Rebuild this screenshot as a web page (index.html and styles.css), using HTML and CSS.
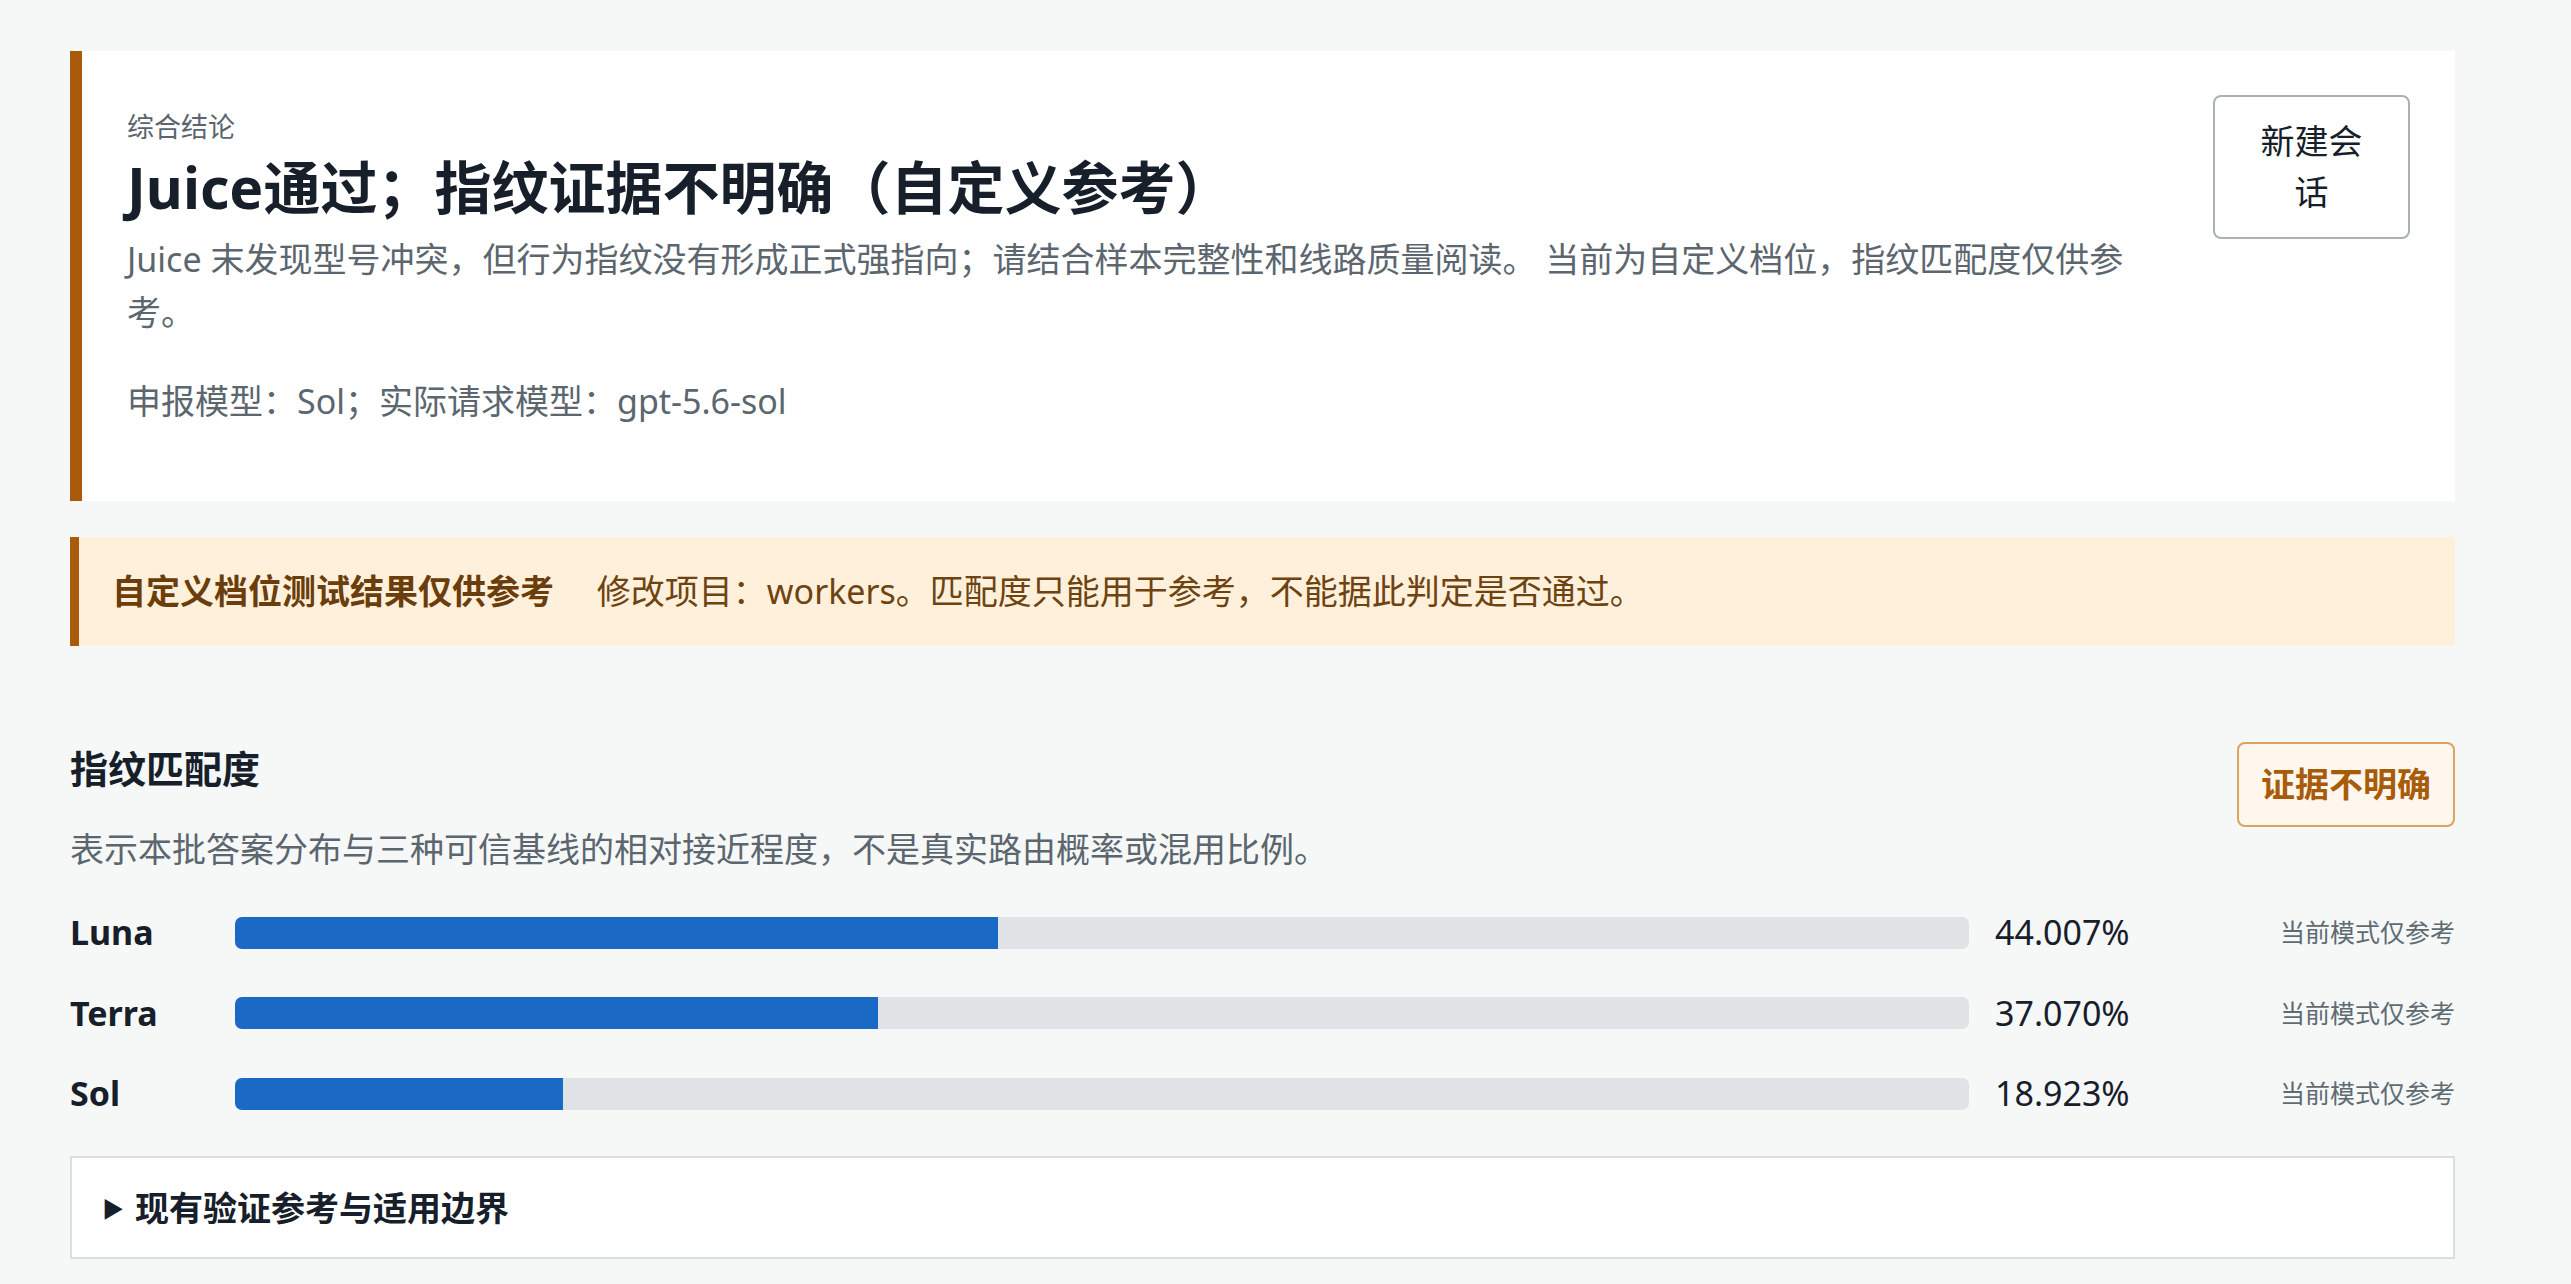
FILE: index.html
```html
<!DOCTYPE html>
<html lang="zh-CN">
<head>
    <meta charset="UTF-8">
    <meta name="viewport" content="width=device-width, initial-scale=1.0">
    <title>综合结论</title>
    <link rel="stylesheet" href="styles.css">
</head>
<body>
    <main class="page">
        <!-- Verdict card -->
        <section class="verdict-card">
            <div class="verdict-body">
                <div class="verdict-label">综合结论</div>
                <h1 class="verdict-title">Juice通过；指纹证据不明确（自定义参考）</h1>
                <p class="verdict-text">Juice 末发现型号冲突，但行为指纹没有形成正式强指向；请结合样本完整性和线路质量阅读。 当前为自定义档位，指纹匹配度仅供参考。</p>
                <p class="verdict-meta">申报模型：Sol；实际请求模型：gpt-5.6-sol</p>
            </div>
            <button class="new-session">新建会话</button>
        </section>

        <!-- Custom tier notice -->
        <div class="notice">
            <strong>自定义档位测试结果仅供参考</strong>
            <span>修改项目：workers。匹配度只能用于参考，不能据此判定是否通过。</span>
        </div>

        <!-- Fingerprint match -->
        <section class="match">
            <div class="match-head">
                <div>
                    <h2>指纹匹配度</h2>
                    <p class="match-desc">表示本批答案分布与三种可信基线的相对接近程度，不是真实路由概率或混用比例。</p>
                </div>
                <span class="badge">证据不明确</span>
            </div>

            <div class="match-rows">
                <div class="match-row">
                    <span class="row-name">Luna</span>
                    <div class="bar"><div class="bar-fill" style="width: 44.007%"></div></div>
                    <span class="row-value">44.007%</span>
                    <span class="row-hint">当前模式仅参考</span>
                </div>
                <div class="match-row">
                    <span class="row-name">Terra</span>
                    <div class="bar"><div class="bar-fill" style="width: 37.070%"></div></div>
                    <span class="row-value">37.070%</span>
                    <span class="row-hint">当前模式仅参考</span>
                </div>
                <div class="match-row">
                    <span class="row-name">Sol</span>
                    <div class="bar"><div class="bar-fill" style="width: 18.923%"></div></div>
                    <span class="row-value">18.923%</span>
                    <span class="row-hint">当前模式仅参考</span>
                </div>
            </div>

            <details class="refs">
                <summary>现有验证参考与适用边界</summary>
            </details>
        </section>
    </main>
</body>
</html>
```

FILE: styles.css
```css
* {
    box-sizing: border-box;
}
body {
    margin: 0;
    background: #f6f8f8;
    color: #17202a;
    font-family: "Noto Sans", "Noto Sans CJK SC", sans-serif;
    font-size: 34px;
    line-height: 51px;
}
.page {
    width: 2385px;
    margin-left: 70px;
    padding-top: 51px;
}
.verdict-card {
    display: flex;
    justify-content: space-between;
    align-items: flex-start;
    gap: 40px;
    background: #fff;
    border-left: 12px solid #a95a0b;
    padding: 44px 45px 44px 45px;
}
.verdict-label {
    margin-top: 12px;
    font-size: 27px;
    line-height: 40px;
    color: #5b656d;
}
.verdict-title {
    margin: 4px 0 0;
    font-size: 57px;
    line-height: 72px;
    font-weight: 700;
}
.verdict-text {
    margin: 10px 0 0;
    line-height: 53px;
    color: #5b666f;
}
.verdict-meta {
    margin: 36px 0 30px;
    line-height: 52px;
    color: #5b666f;
}
.new-session {
    flex: none;
    width: 197px;
    padding: 19px 36px;
    background: #fff;
    border: 2px solid #a9b1b6;
    border-radius: 8px;
    color: #17202a;
    font: inherit;
    line-height: 51px;
}
.notice {
    margin-top: 36px;
    background: #fff0dc;
    border-left: 9px solid #a95a0b;
    padding: 29px 33px;
    color: #6e4310;
}
.notice strong {
    color: #6b3d0a;
    margin-right: 34px;
}
.match {
    margin-top: 96px;
}
.match-head {
    display: flex;
    justify-content: space-between;
    align-items: flex-start;
}
.match-head h2 {
    margin: 2px 0 0;
    font-size: 38px;
    line-height: 49px;
}
.match-desc {
    margin: 31px 0 0;
    color: #5b666f;
}
.badge {
    padding: 15px 22px;
    background: #fff7ee;
    border: 2px solid #dba35f;
    border-radius: 8px;
    color: #a85c0a;
    font-weight: 700;
}
.match-rows {
    display: flex;
    flex-direction: column;
    gap: 29.5px;
    margin-top: 32px;
}
.match-row {
    display: grid;
    grid-template-columns: 139px 1fr 170px 264px;
    column-gap: 26px;
    align-items: center;
}
.row-name {
    font-weight: 700;
}
.bar {
    height: 32px;
    background: #dfe3e6;
    border-radius: 7px;
    overflow: hidden;
}
.bar-fill {
    height: 100%;
    background: #1a69c4;
}
.row-hint {
    text-align: right;
    font-size: 25px;
    color: #5f6b73;
}
.refs {
    margin-top: 37px;
    background: #fff;
    border: 2px solid #d9dee2;
    padding: 25px 30px 23px;
}
.refs summary {
    display: flex;
    align-items: center;
    font-weight: 700;
    list-style: none;
    cursor: pointer;
}
.refs summary::-webkit-details-marker {
    display: none;
}
.refs summary::before {
    content: "▶";
    font-size: 22px;
    margin-right: 11px;
}
.refs[open] summary::before {
    content: "▼";
}
```
